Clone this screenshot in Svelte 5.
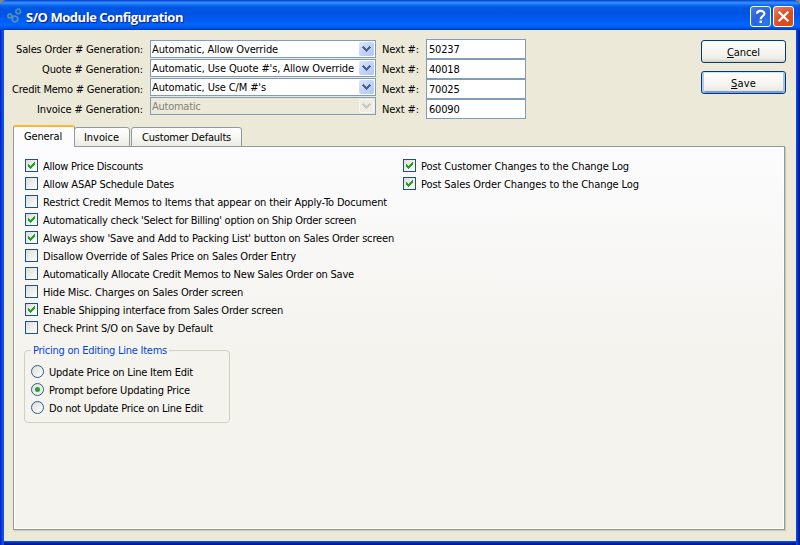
<script>
  const generation = [
    { label: 'Sales Order # Generation:', lw: 127, value: 'Automatic, Allow Override', vw: 126 },
    { label: 'Quote # Generation:', lw: 101, value: "Automatic, Use Quote #'s, Allow Override", vw: 202 },
    { label: 'Credit Memo # Generation:', lw: 131, value: "Automatic, Use C/M #'s", vw: 114 },
    { label: 'Invoice # Generation:', lw: 106, value: 'Automatic', vw: 48.5, disabled: true }
  ];
  const numbers = ['50237', '40018', '70025', '60090'];
  const tabs = [
    { name: 'General', w: 38 },
    { name: 'Invoice', w: 35 },
    { name: 'Customer Defaults', w: 89 }
  ];
  const options = [
    { text: 'Allow Price Discounts', w: 100, on: true },
    { text: 'Allow ASAP Schedule Dates', w: 131, on: false },
    { text: 'Restrict Credit Memos to Items that appear on their Apply-To Document', w: 344, on: false },
    { text: "Automatically check 'Select for Billing' option on Ship Order screen", w: 313, on: true },
    { text: "Always show 'Save and Add to Packing List' button on Sales Order screen", w: 351, on: true },
    { text: 'Disallow Override of Sales Price on Sales Order Entry', w: 253, on: false },
    { text: 'Automatically Allocate Credit Memos to New Sales Order on Save', w: 311, on: false },
    { text: 'Hide Misc. Charges on Sales Order screen', w: 200, on: false },
    { text: 'Enable Shipping interface from Sales Order screen', w: 240, on: true },
    { text: 'Check Print S/O on Save by Default', w: 170, on: false }
  ];
  const logOptions = [
    { text: 'Post Customer Changes to the Change Log', w: 208, on: true },
    { text: 'Post Sales Order Changes to the Change Log', w: 218, on: true }
  ];
  const pricing = [
    { text: 'Update Price on Line Item Edit', w: 144, on: false },
    { text: 'Prompt before Updating Price', w: 141, on: true },
    { text: 'Do not Update Price on Line Edit', w: 154, on: false }
  ];

  // Tracks a label so that it fills the given width.
  function fit(node, width) {
    const natural = node.getBoundingClientRect().width;
    node.style.letterSpacing = (width - natural) / node.textContent.length + 'px';
  }
</script>

{#snippet check(o)}
  <div class="option">
    <span class="box">
      {#if o.on}
        <svg width="7" height="7" viewBox="0 0 7 7" shape-rendering="crispEdges"><path d="M0 2h1v1h1v1h1V3h1V2h1V1h1V0h1v3H6v1H5v1H4v1H3v1H2V6H1V5H0z" fill="#21a121" /></svg>
      {/if}
    </span>
    <span class="t" use:fit={o.w}>{o.text}</span>
  </div>
{/snippet}

<div class="backdrop">
  <div class="window">
    <header>
      <svg class="gears" width="16" height="16" viewBox="0 0 16 16" fill="none">
        <g stroke="#5b9db4" stroke-width="1.2" stroke-dasharray="1.2 .8" opacity=".7">
          <circle cx="2.800" cy="8" r="2.500" /><circle cx="11.200" cy="3.500" r="2.900" /><circle cx="8" cy="11" r="3.500" />
        </g>
        <g stroke="#4f90b8" stroke-width="1.400">
          <circle cx="2.800" cy="8" r="1.800" /><circle cx="11.200" cy="3.500" r="2.100" /><circle cx="8" cy="11" r="2.600" />
        </g>
      </svg>
      <h1><span class="t" use:fit={157}>S/O Module Configuration</span></h1>
      <button class="cap help" aria-label="Help">
        <svg width="19" height="19" viewBox="0 0 19 19" fill="none"><path d="M6 6.8C6 3 13.4 3 13.4 6.6c0 2.6-3.7 2.6-3.7 5.6" stroke="#fff" stroke-width="2.2" /><path d="M8.5 13.6h2.5V16H8.500z" fill="#fff" /></svg>
      </button>
      <button class="cap close" aria-label="Close">
        <svg width="19" height="19" viewBox="0 0 19 19"><path d="M4.700 4.700l9.600 9.600M14.300 4.700l-9.600 9.600" stroke="#fff" stroke-width="2.300" /></svg>
      </button>
    </header>

    <main>
      <section class="top">
        <div class="labels">
          {#each generation as g}<div><span class="t" use:fit={g.lw}>{g.label}</span></div>{/each}
        </div>
        <div class="combos">
          {#each generation as g}
            <div class="combo" class:disabled={g.disabled}>
              <span class="t" use:fit={g.vw}>{g.value}</span>
              <i><svg width="9" height="7" viewBox="0 0 9 7" shape-rendering="crispEdges"><path d="M0 1h1V0h1v1h1v1h1v1h1V2h1V1h1V0h1v1h1v1H8v1H7v1H6v1H5v1H4V5H3V4H2V3H1V2H0z" fill="currentColor" /></svg></i>
            </div>
          {/each}
        </div>
        <div class="next">
          {#each numbers as n}<div><span class="t" use:fit={37}>Next #:</span></div>{/each}
        </div>
        <div class="fields">
          {#each numbers as n}<div class="field"><span class="t" use:fit={30.5}>{n}</span></div>{/each}
        </div>
        <div class="actions">
          <button><span class="t" use:fit={33}><u>C</u>ancel</span></button>
          <button class="default"><span class="t" use:fit={25}><u>S</u>ave</span></button>
        </div>
      </section>

      <nav>
        {#each tabs as tab, i}
          <div class="tab" class:active={i === 0}><span class="t" use:fit={tab.w}>{tab.name}</span></div>
        {/each}
      </nav>

      <section class="panel">
        <div class="columns">
          <div class="col">{#each options as o}{@render check(o)}{/each}</div>
          <div class="col">{#each logOptions as o}{@render check(o)}{/each}</div>
        </div>
        <div class="group">
          <div class="legend"><span class="t" use:fit={138}>Pricing on Editing Line Items</span></div>
          {#each pricing as p}
            <div class="option">
              <span class="radio" class:on={p.on}></span>
              <span class="t" use:fit={p.w}>{p.text}</span>
            </div>
          {/each}
        </div>
      </section>
    </main>
  </div>
</div>

<style>
  * { box-sizing: border-box; }
  .backdrop {
    width: 800px; height: 545px; overflow: hidden; background: #8a8778;
    font-family: Tahoma, 'DejaVu Sans Condensed', 'DejaVu Sans', sans-serif;
    font-stretch: condensed; font-size: 11px; line-height: 14px; color: #000;
  }
  .t { display: inline-block; white-space: pre; }
  .window {
    height: 545px; display: flex; flex-direction: column; padding: 0 4px 4px;
    border-radius: 7px 7px 0 0;
    background: linear-gradient(90deg, #0010a8 0, #0831d9 1px, #0a4be8 2px, #0855e8 4px, transparent 4px, transparent 796px, #0855e8 796px, #0040e0 797px, #001ea0 799px, #00138c 800px),
      linear-gradient(#0855e8 541px, #0347e3 542px, #0025b0 543px, #00138c 545px);
  }
  header {
    height: 30px; flex: none; margin: 0 -4px; padding: 3px 6px 0 7px; display: flex; align-items: center;
    border-radius: 7px 7px 0 0;
    background: linear-gradient(#0831b8 0, #1464e8 1px, #3a93ff 3px, #0b6cf5 5px, #0055e0 8px, #0054e3 14px, #005cf2 20px, #0066ff 25px, #005df5 27px, #0046d0 29px, #0139b8 30px);
  }
  .gears { margin-top: -2px; }
  h1 {
    margin: 0 auto 0 3px; color: #fff; font-size: 13px; line-height: 18px; font-weight: bold;
    font-family: 'Trebuchet MS', 'Open Sans', sans-serif; font-stretch: normal; text-shadow: 1px 1px 1px #0a1883;
  }
  .cap { width: 21px; height: 21px; padding: 0; border: 1px solid #fff; border-radius: 3px; display: flex; }
  .help { background: radial-gradient(circle at 75% 85%, #2b76f5, #2a62e0 50%, #4b7ee8 100%); margin-right: 2px; }
  .close { background: radial-gradient(circle at 80% 90%, #dd4a14, #da4d24 50%, #e8896e 100%); }
  main { flex: 1; background: #ece9d8; padding: 9px 11px 11px 9px; display: flex; flex-direction: column; }
  .top { display: flex; height: 86px; align-items: flex-start; }
  .labels { width: 130px; }
  .labels div, .next div { height: 20px; padding-top: 4px; display: flex; justify-content: flex-end; }
  .next div { justify-content: flex-start; }
  .combos { margin: 1px 6px 0 7px; width: 226px; display: flex; flex-direction: column; gap: 1px; }
  .combo {
    height: 18px; border: 1px solid #7f9db9; background: #fff; padding: 1px 1px 1px 1px;
    display: flex; align-items: center; justify-content: space-between;
  }
  .combo .t { padding-top: 1px; }
  .combo i {
    width: 15px; height: 14px; border-radius: 2px; display: flex; align-items: center; justify-content: center;
    color: #4d6185; background: linear-gradient(135deg, #dce6fe, #c3d3fd 50%, #afc6f8);
  }
  .combo.disabled { background: #ece9d8; color: #85837a; }
  .combo.disabled i { background: #eeede5; color: #c9c7ba; border: 1px solid #f7f6f1; }
  .next { width: 44px; }
  .field { width: 100px; height: 20px; border: 1px solid #7f9db9; background: #fff; padding: 3px 2px 0; }
  .actions { margin: 1px 0 0 auto; margin-right: -1px; display: flex; flex-direction: column; gap: 8px; }
  .actions button {
    width: 85px; height: 23px; border: 1px solid #003c74; border-radius: 3px; padding: 2px 0 0;
    font: inherit; color: inherit; background: linear-gradient(#fff, #f4f3ee 60%, #ecebe5 85%, #d6d0c5);
  }
  .actions .default { box-shadow: inset 0 1px #cee0fc, inset 2px 0 #b0c8f4, inset -2px 0 #a5c0f0, inset 0 -2px #7a9be0; }
  nav { height: 22px; display: flex; align-items: flex-end; position: relative; z-index: 1; margin-bottom: -1px; }
  .tab {
    height: 20px; border: 1px solid #919b9c; border-radius: 3px 3px 0 0; padding: 3px 9px 0; margin-right: 1px;
    background: linear-gradient(#fff, #f5f5f0 60%, #ecebe6); width: 56px; text-align: left;
  }
  .tab:last-child { width: 111px; padding-left: 10px; }
  .tab.active {
    width: 62px; height: 22px; border-top: 2px solid #ffb52d; border-bottom: 0; background: #fcfcfe;
    padding: 3px 10px 0; margin-right: -1px; position: relative; border-radius: 3px 3px 0 0;
  }
  .panel {
    flex: 1; border: 1px solid #919b9c; padding: 9px 10px 10px; background: linear-gradient(#fcfcfe, #f4f3ee 52%);
    box-shadow: inset -1px -1px #fff, inset 1px 0 #fff, 1px 1px 1px #cfcbb8;
  }
  .columns { display: flex; padding-left: 1px; }
  .col:first-child { width: 378px; }
  .option { height: 18px; display: flex; align-items: center; gap: 5px; }
  .option .t { padding-top: 3px; }
  .box {
    width: 13px; height: 13px; border: 1px solid #1c5180; display: flex; align-items: center; justify-content: center;
    background: linear-gradient(135deg, #dcdcd7, #fff);
  }
  .group { width: 206px; height: 73px; margin-top: 14px; border: 1px solid #d0d0bf; border-radius: 4px; padding: 0 6px; }
  .legend { color: #0046d5; height: 12px; margin-top: -7px; margin-bottom: 6px; }
  .legend .t { background: #f5f4f0; padding: 0 2px; margin-left: 0; }
  .radio {
    width: 13px; height: 13px; border: 1px solid #2c5d88; border-radius: 50%;
    background: linear-gradient(135deg, #dcdcd7, #fff); display: flex; align-items: center; justify-content: center;
  }
  .radio.on::after { content: ''; width: 5px; height: 5px; border-radius: 50%; background: #22a822; }
</style>
